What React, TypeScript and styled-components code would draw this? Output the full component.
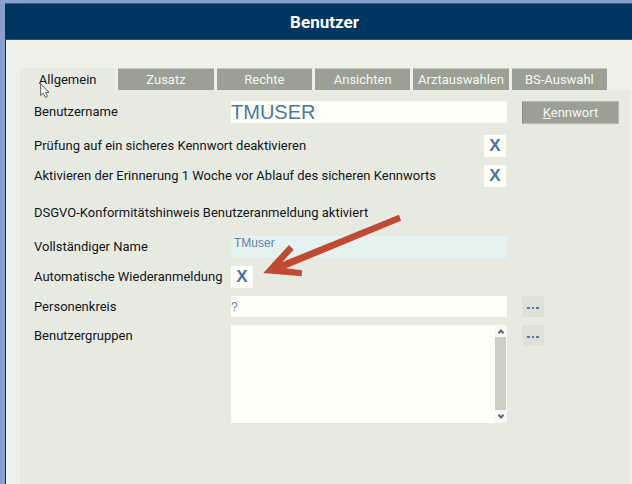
import React, { useState } from 'react';
import styled, { createGlobalStyle } from 'styled-components';

const GlobalStyle = createGlobalStyle`
  *, *::before, *::after { box-sizing: border-box; }
  body { margin: 0; background: #eef1e8; font-family: Roboto, "Liberation Sans", sans-serif; font-size: 13px; }
  button, input { font: inherit; border: 0; border-radius: 0; padding: 0; margin: 0; }
`;

const Window = styled.div`
  display: flex;
  flex-direction: column;
  min-height: 100vh;
  border-top: 3px solid #8c9fc9;
  border-left: 5px solid #8c9fc9;
  background: #eef1e8;
`;

const TitleBar = styled.header`
  display: flex;
  align-items: center;
  justify-content: center;
  height: 37px;
  padding-left: 12px;
  border-top: 1px solid #3f5f95;
  border-bottom: 1px solid #2d5379;
  background: #003461;
`;

const Title = styled.h1`
  margin: 0;
  color: #ffffff;
  font-size: 17px;
  line-height: 20px;
  font-weight: 700;
`;

const Content = styled.main`
  flex: 1;
  display: flex;
  flex-direction: column;
  padding: 28px 2px 0 14px;
  border-left: 1px solid #003461;
`;

const TabBar = styled.div`
  display: grid;
  grid-template-columns: repeat(6, 1fr);
  gap: 3px;
  height: 22px;
  padding-right: 23px;
`;

const Tab = styled.button<{ $active: boolean }>`
  position: relative;
  border-top: 1px solid ${p => (p.$active ? '#e6eae1' : '#c3c7bd')};
  background: ${p => (p.$active ? '#e6eae1' : '#9b9f94')};
  color: ${p => (p.$active ? '#15151c' : '#f5f7f1')};
  line-height: 20px;
  white-space: nowrap;
`;

const Cursor = styled.svg`
  position: absolute;
  left: 20px;
  top: 14px;
  z-index: 1;
  width: 12px;
  height: 17px;
`;

const Panel = styled.form`
  position: relative;
  flex: 1;
  display: flex;
  flex-direction: column;
  gap: 8px;
  padding: 11px 11px 8px 14px;
  background: #e6eae1;
`;

const Row = styled.div<{ $compact?: boolean }>`
  display: grid;
  grid-template-columns: 197px minmax(0, 1fr) 97px;
  height: ${p => (p.$compact ? '21px' : 'auto')};
  min-height: 21px;
  align-items: start;
`;

const WideRow = styled(Row)`
  grid-template-columns: minmax(0, 1fr) 22px 113px;
`;

const FirstRow = styled(Row)`
  margin-bottom: 3px;
`;

const NoteRow = styled.p`
  margin: 7px 0 4px;
  line-height: 22px;
  color: #15151c;
`;

const Label = styled.label`
  line-height: 22px;
  color: #15151c;
  white-space: nowrap;
`;

const Field = styled.div`
  padding-right: 15px;
`;

const TextInput = styled.input<{ $large?: boolean; $tinted?: boolean; $compact?: boolean }>`
  display: block;
  width: 100%;
  height: ${p => (p.$compact ? '21px' : '22px')};
  padding: ${p => (p.$tinted ? '0 3px 8px' : '0')};
  background: ${p => (p.$tinted ? '#e6f2f0' : '#fffff8')};
  color: ${p => (p.$large ? '#4d779f' : '#6582a3')};
  font-family: "Liberation Sans", Arial, sans-serif;
  font-size: ${p => (p.$large ? '20px' : '12px')};
  outline: 0;
`;

const CheckBox = styled.span`
  display: grid;
  width: 22px;
  height: 22px;
  place-items: center;
  background: #fffff8;
`;

const CheckInput = styled.input`
  grid-area: 1 / 1;
  appearance: none;
  width: 22px;
  height: 22px;
`;

const CheckMark = styled.span`
  grid-area: 1 / 1;
  pointer-events: none;
  color: #4875a0;
  font-family: "Liberation Sans", Arial, sans-serif;
  font-size: 17px;
  line-height: 22px;
  font-weight: 700;
`;

const PasswordButton = styled.button`
  height: 23px;
  border: 1px solid #b5b9ae;
  border-left-color: #8c9086;
  background: #9b9f94;
  color: #f5f7f1;
`;

const MoreButton = styled.button`
  display: grid;
  place-items: center;
  width: 22px;
  height: 21px;
  background: #dde1d8;
`;

const ListFrame = styled.div`
  display: grid;
  grid-template-columns: minmax(0, 1fr) 12px;
  height: 98px;
  background: #fffff8;
`;

const List = styled.ul`
  margin: 0;
  padding: 0;
  list-style: none;
`;

const ScrollBar = styled.div`
  display: grid;
  grid-template-rows: 12px 1fr 13px;
  background: #f6f9f3;
`;

const ScrollButton = styled.button`
  display: grid;
  place-items: center;
  background: transparent;
`;

const ScrollThumb = styled.div`
  margin-right: 1px;
  background: #cccfc6;
`;

const Arrow = styled.svg`
  position: absolute;
  left: 240px;
  top: 120px;
  width: 143px;
  height: 70px;
  pointer-events: none;
`;

const tabs = ['Allgemein', 'Zusatz', 'Rechte', 'Ansichten', 'Arztauswahlen', 'BS-Auswahl'];

function Check({ id }: { id: string }) {
  const [checked, setChecked] = useState(true);
  return (
    <CheckBox>
      <CheckInput id={id} type="checkbox" checked={checked} onChange={e => setChecked(e.target.checked)} />
      {checked && <CheckMark aria-hidden="true">X</CheckMark>}
    </CheckBox>
  );
}

function More({ label }: { label: string }) {
  return (
    <MoreButton type="button" aria-label={label}>
      <svg width="12" height="4" viewBox="0 0 12 4" fill="#5478a8">
        <rect x="0" y="2" width="3" height="2" />
        <rect x="5" y="2" width="2" height="2" />
        <rect x="9" y="2" width="3" height="2" />
      </svg>
    </MoreButton>
  );
}

function Chevron({ down }: { down?: boolean }) {
  return (
    <svg width="6" height="5" viewBox="0 0 6 5" fill="none" stroke="#62665e" strokeWidth="2">
      <path d={down ? 'M.5 .8 3 3.5 5.5 .8' : 'M.5 4.2 3 1.5 5.5 4.2'} />
    </svg>
  );
}

export default function App() {
  const [active, setActive] = useState(0);
  return (
    <>
      <GlobalStyle />
      <Window>
        <TitleBar>
          <Title>Benutzer</Title>
        </TitleBar>
        <Content>
          <TabBar role="tablist">
            {tabs.map((name, i) => (
              <Tab key={name} type="button" role="tab" aria-selected={i === active} $active={i === active} onClick={() => setActive(i)}>
                {name}
                {i === 0 && (
                  <Cursor viewBox="0 0 12 17" aria-hidden="true">
                    <path d="M.7 1v11.5l2.7-2.4 1.9 4.2 2.2-1-1.9-4H9Z" fill="#fff" stroke="#55575a" strokeWidth="1" />
                  </Cursor>
                )}
              </Tab>
            ))}
          </TabBar>
          <Panel onSubmit={e => e.preventDefault()}>
            <FirstRow>
              <Label htmlFor="username">Benutzername</Label>
              <Field>
                <TextInput id="username" $large defaultValue="TMUSER" />
              </Field>
              <PasswordButton type="button">
                <u>K</u>ennwort
              </PasswordButton>
            </FirstRow>
            <WideRow>
              <Label htmlFor="safe">Prüfung auf ein sicheres Kennwort deaktivieren</Label>
              <Check id="safe" />
            </WideRow>
            <WideRow>
              <Label htmlFor="remind">Aktivieren der Erinnerung 1 Woche vor Ablauf des sicheren Kennworts</Label>
              <Check id="remind" />
            </WideRow>
            <NoteRow>DSGVO-Konformitätshinweis Benutzeranmeldung aktiviert</NoteRow>
            <Row>
              <Label htmlFor="fullname">Vollständiger Name</Label>
              <Field>
                <TextInput id="fullname" $tinted defaultValue="TMuser" />
              </Field>
            </Row>
            <Row>
              <Label htmlFor="relogin">Automatische Wiederanmeldung</Label>
              <Check id="relogin" />
            </Row>
            <Row $compact>
              <Label htmlFor="circle">Personenkreis</Label>
              <Field>
                <TextInput id="circle" $compact defaultValue="?" />
              </Field>
              <More label="Personenkreis" />
            </Row>
            <Row>
              <Label id="groups">Benutzergruppen</Label>
              <Field>
                <ListFrame>
                  <List role="listbox" aria-labelledby="groups" />
                  <ScrollBar>
                    <ScrollButton type="button" aria-label="Nach oben">
                      <Chevron />
                    </ScrollButton>
                    <ScrollThumb />
                    <ScrollButton type="button" aria-label="Nach unten">
                      <Chevron down />
                    </ScrollButton>
                  </ScrollBar>
                </ListFrame>
              </Field>
              <More label="Benutzergruppen" />
            </Row>
            <Arrow viewBox="150 60 429 210" aria-hidden="true">
              <path d="M567 74 573 92 228 235 276 241 275 259 160 249 237 165 251 179 217 216Z" fill="#c04a32" />
            </Arrow>
          </Panel>
        </Content>
      </Window>
    </>
  );
}
